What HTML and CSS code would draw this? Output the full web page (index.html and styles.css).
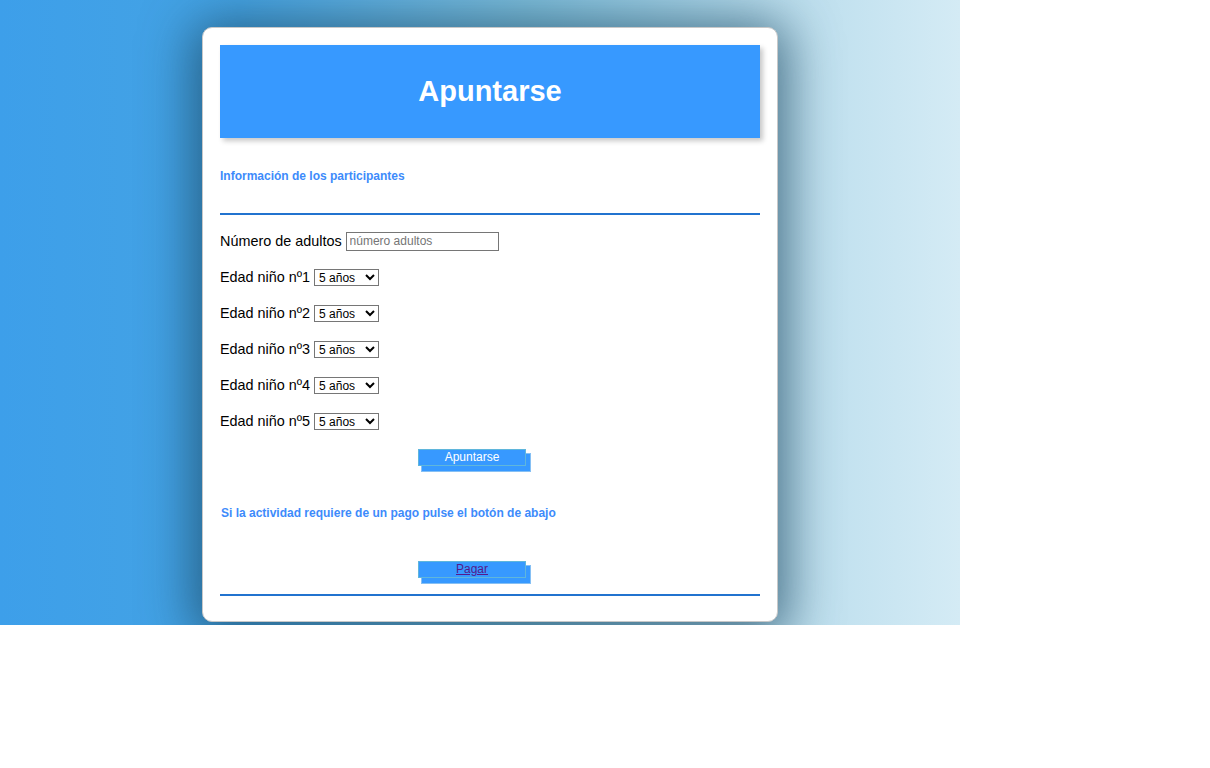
FILE: index.html
```html
<!DOCTYPE html>
<html lang="es">
<head>
<meta charset="utf-8">
<title>Apuntarse</title>
<link rel="stylesheet" href="styles.css">
</head>
<body>
<div class="page">
  <div class="card">
    <div class="header"><h1 class="title">Apuntarse</h1></div>
    <h5 class="section-title">Información de los participantes</h5>
    <hr class="rule">
    <form class="form">
      <div class="row"><label>Número de adultos</label><input class="text-input" type="text" placeholder="número adultos"></div>
      <div class="row"><label>Edad niño nº1</label><select class="sel"><option>5 años</option></select></div>
      <div class="row"><label>Edad niño nº2</label><select class="sel"><option>5 años</option></select></div>
      <div class="row"><label>Edad niño nº3</label><select class="sel"><option>5 años</option></select></div>
      <div class="row"><label>Edad niño nº4</label><select class="sel"><option>5 años</option></select></div>
      <div class="row"><label>Edad niño nº5</label><select class="sel"><option>5 años</option></select></div>
      <div class="btn-wrap"><span class="btn">Apuntarse</span></div>
    </form>
    <h5 class="pay-text">Si la actividad requiere de un pago pulse el botón de abajo</h5>
    <div class="btn-wrap pay-wrap"><span class="btn"><a class="pay-link" href="#">Pagar</a></span></div>
    <hr class="rule bottom-rule">
  </div>
</div>
</body>
</html>
```
FILE: styles.css
```css
html, body {
  margin: 0;
  padding: 0;
  background: #fff;
  font-family: "Liberation Sans", Arial, sans-serif;
}
.page {
  width: 960px;
  height: 625px;
  overflow: hidden;
  background: linear-gradient(to right, #3d9fea 0%, #45a3e3 25%, #7fbfdc 55%, #b8dcec 80%, #d4ebf5 100%);
  padding-top: 27px;
  box-sizing: border-box;
}
.card {
  margin-left: 202px;
  width: 576px;
  height: 595px;
  box-sizing: border-box;
  background: #fff;
  border: 1px solid #c8c8c8;
  border-radius: 10px;
  padding: 17px 17px 0 17px;
  box-shadow: 0 6px 50px 10px rgba(25, 70, 95, 0.7);
}
.header {
  height: 93px;
  background: #3799ff;
  display: flex;
  align-items: center;
  justify-content: center;
  box-shadow: 3px 3px 5px rgba(0, 0, 0, 0.22);
}
.title {
  margin: 0;
  color: #fff;
  font-size: 29px;
  font-weight: bold;
}
.section-title {
  margin: 31px 0 0 0;
  font-size: 12px;
  line-height: 15px;
  font-weight: bold;
  color: #3d8bfb;
}
.rule {
  margin: 29px 0 0 0;
  border: 0;
  height: 2px;
  background: #2173cf;
}
.form {
  margin-top: 16px;
}
.row {
  height: 20px;
  margin-bottom: 16px;
  display: flex;
  align-items: center;
  font-size: 14.4px;
  color: #000;
}
.row label {
  margin-right: 4px;
}
.text-input {
  width: 153px;
  height: 19px;
  box-sizing: border-box;
  border: 1px solid #767676;
  padding: 0 3px;
  font-family: "Liberation Sans", Arial, sans-serif;
  font-size: 12px;
  margin-left: 0;
}
.text-input::placeholder {
  color: #757575;
}
.sel {
  width: 65px;
  height: 17px;
  box-sizing: border-box;
  border: 1px solid #767676;
  border-radius: 0;
  font-family: "Liberation Sans", Arial, sans-serif;
  font-size: 12px;
  padding: 0;
  background: #fff;
  color: #000;
}
.btn-wrap {
  margin-top: 2px;
  padding-left: 198px;
  height: 22px;
}
.btn {
  display: inline-block;
  width: 108px;
  height: 17px;
  box-sizing: border-box;
  background: #3799ff;
  border: 1px solid #5fb6dc;
  color: #fff;
  font-size: 12px;
  line-height: 15px;
  text-align: center;
  box-shadow: 4px 5px 0 0 #3799ff, 4px 5px 0 1px #86c0f4;
}
.pay-text {
  margin: 37px 0 0 1px;
  font-size: 12px;
  line-height: 15px;
  font-weight: bold;
  color: #3d8bfb;
}
.pay-wrap {
  margin-top: 38px;
}
.pay-link {
  color: #551a8b;
  text-decoration: underline;
}
.bottom-rule {
  margin-top: 13px;
}
```
